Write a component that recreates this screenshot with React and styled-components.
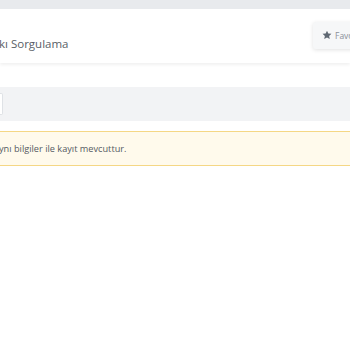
import React from 'react';
import styled, {createGlobalStyle} from 'styled-components';

const Global = createGlobalStyle`
    html, body {
        margin: 0;
        padding: 0;
        background: #ffffff;
        font-family: "Open Sans", "Noto Sans", sans-serif;
    }
    #root {
        width: 350px;
        height: 350px;
        overflow: hidden;
    }
`;

const Page = styled.div`
    display: flex;
    flex-direction: column;
    width: 350px;
`;

const TopBand = styled.div`
    height: 9px;
    background: #e8eaed;
`;

const Header = styled.div`
    height: 54px;
    display: flex;
    align-items: center;
    justify-content: space-between;
    background: #ffffff;
    box-shadow: 0 2px 3px rgba(0, 0, 0, 0.06);
`;

const Title = styled.h1`
    margin: 14px 0 0 -1px;
    font-size: 11.5px;
    font-weight: 400;
    color: #585e66;
    white-space: nowrap;
`;

const FavButton = styled.div`
    display: flex;
    align-items: center;
    gap: 3px;
    flex-shrink: 0;
    height: 27px;
    width: 70px;
    margin: 0 -33px 2px 0;
    padding-left: 9px;
    box-sizing: border-box;
    background: #f6f7f8;
    border-radius: 3px;
    box-shadow: 0 1px 4px rgba(0, 0, 0, 0.12);
    font-size: 8.5px;
    color: #8a9098;
    white-space: nowrap;
    overflow: hidden;
`;

const Filter = styled.div`
    margin-top: 24px;
    height: 34px;
    display: flex;
    align-items: center;
    background: #f2f3f5;
`;

const InputEdge = styled.div`
    width: 2px;
    height: 20px;
    background: #ffffff;
    border: 1px solid #dfe2e6;
    border-left: none;
    border-radius: 0 2px 2px 0;
`;

const Alert = styled.div`
    margin-top: 10px;
    height: 33px;
    display: flex;
    align-items: center;
    background: #fffaec;
    border-top: 1px solid #f5d785;
    border-bottom: 1px solid #f5d785;
    font-size: 9.2px;
    color: #555b63;
    white-space: nowrap;
`;

const AlertText = styled.span`
    margin-left: -1px;
`;

const Star = () => (
    <svg width="10" height="10" viewBox="0 0 24 24" style={{flexShrink: 0}}>
        <path
            fill="#5f6873"
            d="M12 1.5l3.2 6.9 7.5.8-5.6 5.1 1.6 7.4L12 17.9l-6.7 3.8 1.6-7.4-5.6-5.1 7.5-.8z"
        />
    </svg>
);

export default function App() {
    return (
        <Page>
            <Global/>
            <TopBand/>
            <Header>
                <Title>kı Sorgulama</Title>
                <FavButton>
                    <Star/>
                    <span>Favoriler</span>
                </FavButton>
            </Header>
            <Filter>
                <InputEdge/>
            </Filter>
            <Alert>
                <AlertText>ynı bilgiler ile kayıt mevcuttur.</AlertText>
            </Alert>
        </Page>
    );
}
